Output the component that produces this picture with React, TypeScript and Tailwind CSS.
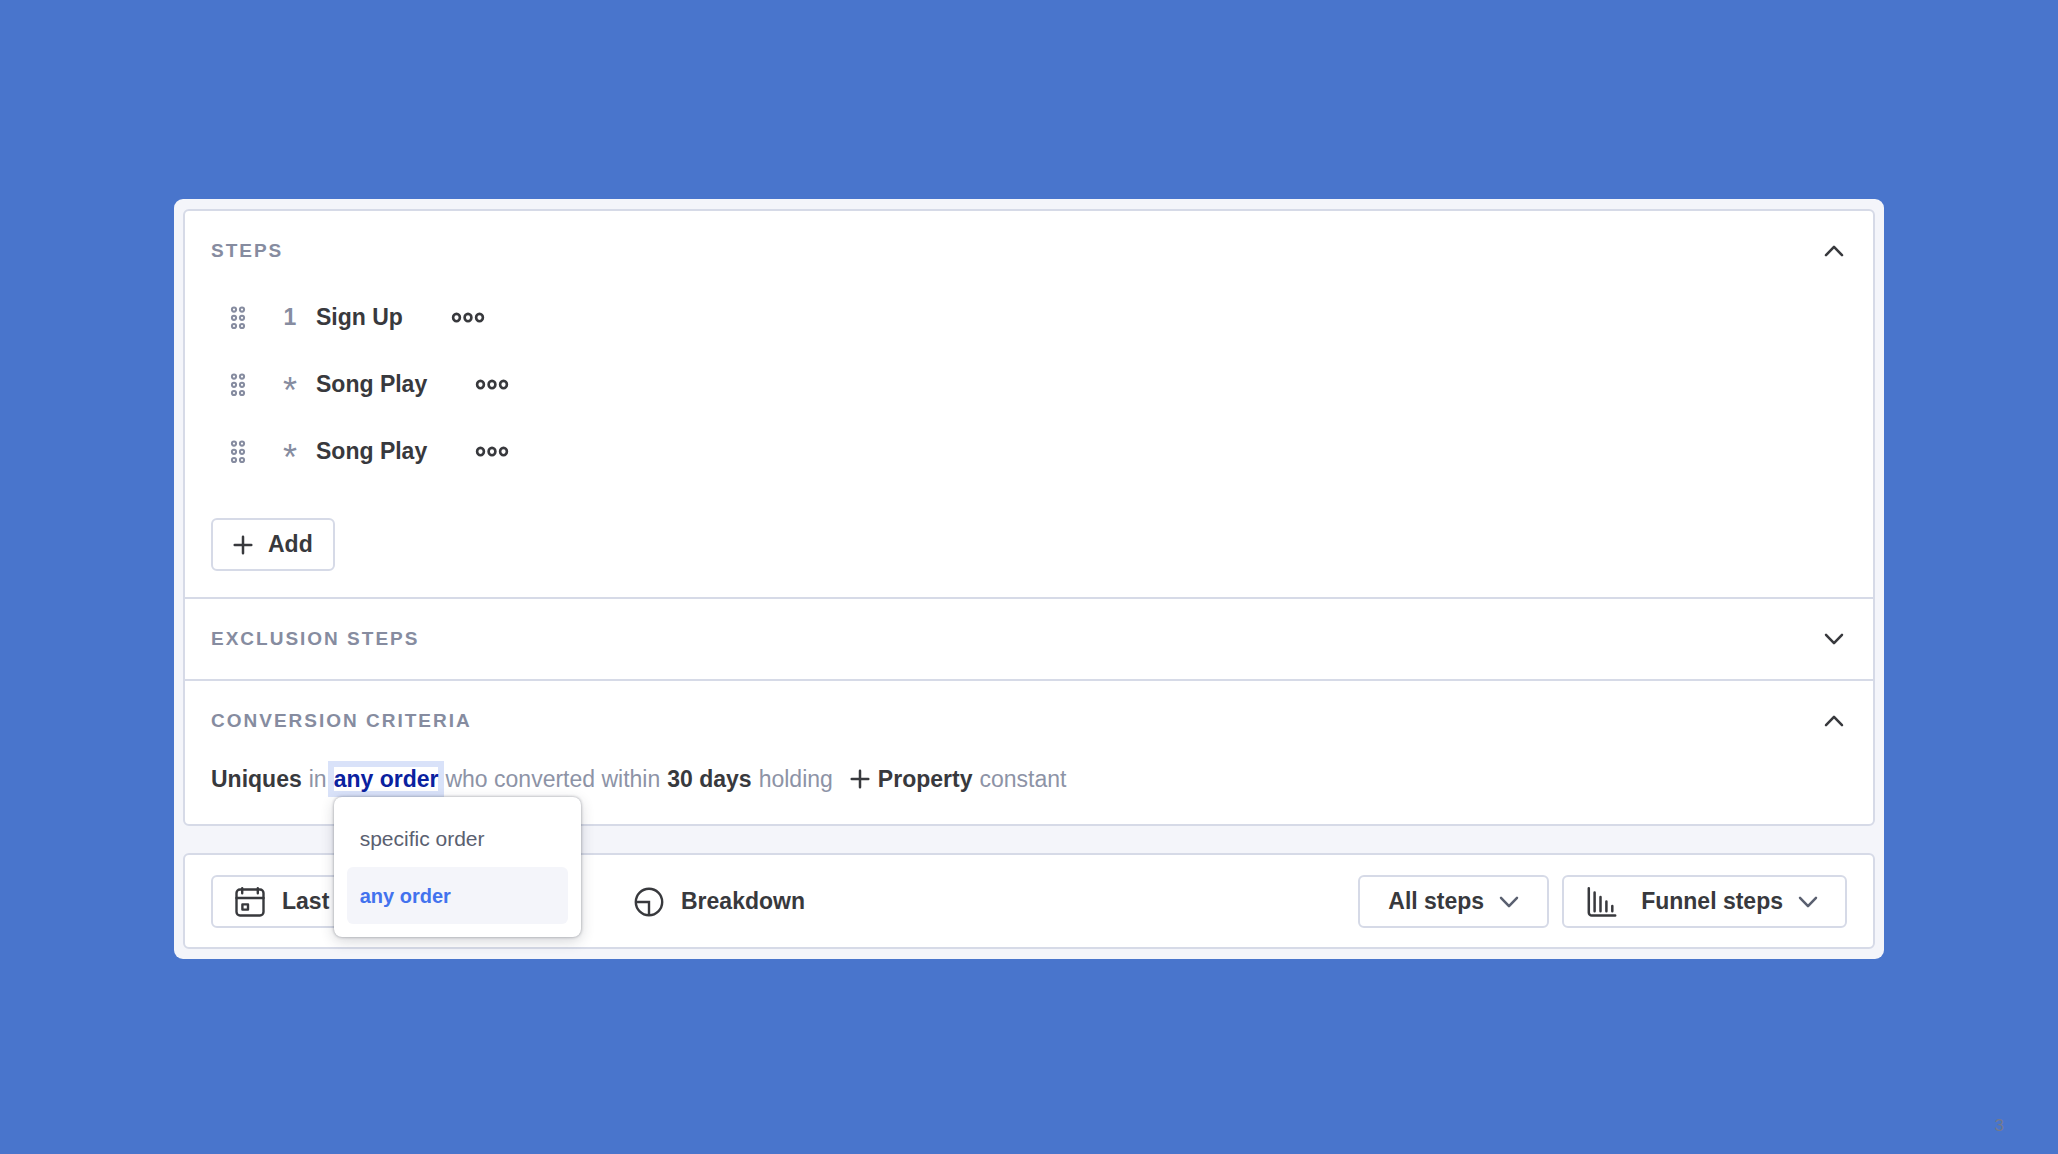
import { useState } from "react";
import type { ReactNode } from "react";

type Step = { id: number; marker: string; name: string };

const STEPS: Step[] = [
  { id: 1, marker: "1", name: "Sign Up" },
  { id: 2, marker: "*", name: "Song Play" },
  { id: 3, marker: "*", name: "Song Play" },
];

const ORDERS = ["specific order", "any order"];

// ── Icons ──
function Chevron({ up = false, className = "" }: { up?: boolean; className?: string }) {
  return (
    <svg width="20" height="12" viewBox="0 0 20 12" fill="none" stroke="currentColor" strokeWidth="2.5" strokeLinecap="round" strokeLinejoin="round" className={`shrink-0 ${className}`}>
      <path d={up ? "M2 10.2 10 1.8l8 8.4" : "M2 1.8 10 10.2l8-8.4"} />
    </svg>
  );
}

function Plus({ className = "" }: { className?: string }) {
  return (
    <svg width="20" height="20" viewBox="0 0 20 20" fill="none" stroke="currentColor" strokeWidth="2.5" strokeLinecap="round" className={`shrink-0 ${className}`}>
      <path d="M10 1.7v16.6M1.7 10h16.6" />
    </svg>
  );
}

function DragHandle() {
  return (
    <svg width="16" height="24" viewBox="0 0 16 24" fill="none" stroke="currentColor" strokeWidth="2">
      {[4, 12].map((x) => [3.6, 11.8, 20].map((y) => <circle key={`${x}-${y}`} cx={x} cy={y} r="2.1" />))}
    </svg>
  );
}

function More() {
  return (
    <svg width="34" height="12" viewBox="0 0 34 12" fill="none" stroke="currentColor" strokeWidth="2.6">
      {[5.5, 17, 28.5].map((x) => <ellipse key={x} cx={x} cy="5.6" rx="3.4" ry="3.7" />)}
    </svg>
  );
}

function Calendar() {
  return (
    <svg width="30" height="30" viewBox="0 0 30 30" fill="none" stroke="currentColor" strokeWidth="2.4" strokeLinecap="round" className="shrink-0">
      <rect x="1.5" y="2.5" width="27" height="26" rx="3.5" />
      <path d="M1.5 11h27M7.2 1.2v5M22.8 1.2v5" />
      <rect x="7.4" y="17.4" width="5.6" height="5.2" strokeLinejoin="round" />
    </svg>
  );
}

function Pie() {
  return (
    <svg width="30" height="30" viewBox="0 0 30 30" fill="none" stroke="currentColor" strokeWidth="2.4" className="shrink-0">
      <circle cx="15" cy="15" r="13.2" />
      <path d="M1.8 15H15v13.2" />
    </svg>
  );
}

function FunnelBars() {
  return (
    <svg width="30" height="32" viewBox="0 0 30 32" fill="none" stroke="currentColor" strokeWidth="2.5" strokeLinecap="round" className="shrink-0">
      <path d="M1.8 2.2v24.2a3 3 0 0 0 3 3h23.4" />
      <path d="M7.6 6.6v18.6M13.5 11v14.2M19.4 15.6v9.6M25.3 20v5.2" />
    </svg>
  );
}

// ── Collapsible section ──
function Section({ title, open = false, divided = true, children }: { title: string; open?: boolean; divided?: boolean; children?: ReactNode }) {
  return (
    <section className={divided ? "border-t-2 border-[#d6dae7]" : ""}>
      <div className="flex h-20 items-center justify-between px-[26px]">
        <h2 className="text-[19px] font-bold uppercase tracking-[2px] text-[#868ca0]">{title}</h2>
        <button aria-label={`Toggle ${title}`} aria-expanded={open} className="px-[3px]">
          <Chevron up={open} />
        </button>
      </div>
      {children}
    </section>
  );
}

function StepRow({ step }: { step: Step }) {
  return (
    <li className="flex h-[53px] items-center">
      <button aria-label={`Reorder ${step.name}`} className="ml-[19px] text-[#868ca0]">
        <DragHandle />
      </button>
      <span className="ml-9 flex w-4 justify-center font-bold text-[#868ca0]">
        {step.marker === "*" ? <span className="pt-3 text-[36px] font-normal leading-[30px]">*</span> : step.marker}
      </span>
      <button className="ml-[18px] font-bold">{step.name}</button>
      <button aria-label={`More options for ${step.name}`} className="ml-12">
        <More />
      </button>
    </li>
  );
}

function OrderMenu({ value, onSelect }: { value: string; onSelect: (order: string) => void }) {
  return (
    <div role="menu" className="absolute left-0 top-[30px] z-10 flex w-[247px] flex-col rounded-lg bg-white p-[13px] shadow-[0_0_3px_rgba(40,45,60,0.45),0_4px_14px_rgba(40,45,60,0.2)]">
      {ORDERS.map((order) => (
        <button
          key={order}
          role="menuitem"
          onClick={() => onSelect(order)}
          className={`h-[57px] rounded-md px-[13px] text-left ${order === value ? "bg-[#f4f5fa] text-[20px] font-bold text-[#4272ee]" : "text-[21px] text-[#5a6070]"}`}
        >
          {order}
        </button>
      ))}
    </div>
  );
}

export default function App() {
  const [order, setOrder] = useState("any order");

  return (
    <div className="flex min-h-screen flex-col bg-[#4975cc] px-[174px] pt-[199px] font-['Liberation_Sans',Arial,sans-serif] text-[23px] text-[#38393d]">
      <main className="rounded-[9px] bg-[#f4f5fa] px-[9px] py-[10px]">
        <div className="rounded-md border-2 border-[#d6dae7] bg-white">
          <Section title="Steps" open divided={false}>
            <div className="px-[26px] pb-[26px]">
              <ul className="flex flex-col gap-[14px]">
                {STEPS.map((step) => <StepRow key={step.id} step={step} />)}
              </ul>
              <button className="mt-10 flex h-[53px] items-center gap-[15px] rounded-md border-2 border-[#d6dae7] px-5 font-bold">
                <Plus />
                Add
              </button>
            </div>
          </Section>

          <Section title="Exclusion Steps" />

          <Section title="Conversion Criteria" open>
            <div className="flex items-center gap-[7px] px-[26px] pb-[27px] leading-[24px] text-[#8d93a6]">
              <button className="font-bold text-[#38393d]">Uniques</button>
              <span>in</span>
              <div className="relative my-[6px] flex">
                <button aria-haspopup="menu" aria-expanded className="font-bold text-[#0a219f] ring-6 ring-[#d9e2f9]">
                  {order}
                </button>
                <OrderMenu value={order} onSelect={setOrder} />
              </div>
              <span>who converted within</span>
              <button className="font-bold text-[#38393d]">30 days</button>
              <span>holding</span>
              <button className="ml-[10px] flex items-center gap-2 font-bold text-[#38393d]">
                <Plus />
                Property
              </button>
              <span>constant</span>
            </div>
          </Section>
        </div>

        <div className="mt-[27px] flex items-center rounded-md border-2 border-[#d6dae7] bg-white px-[26px] pb-[19px] pt-5">
          <button className="flex h-[53px] w-[340px] items-center rounded-md border-2 border-[#d6dae7] px-[22px] font-bold">
            <Calendar />
            <span className="ml-[17px]">Last</span>
            <Chevron className="ml-auto text-[#5a6070]" />
          </button>
          <button className="ml-[83px] flex h-[53px] items-center gap-[17px] font-bold">
            <Pie />
            Breakdown
          </button>
          <div className="ml-auto flex gap-[13px]">
            <button className="flex h-[53px] items-center gap-[15px] rounded-md border-2 border-[#d6dae7] px-7 font-bold">
              All steps
              <Chevron className="text-[#5a6070]" />
            </button>
            <button className="flex h-[53px] items-center rounded-md border-2 border-[#d6dae7] pl-[23px] pr-[27px] font-bold">
              <FunnelBars />
              <span className="ml-6 mr-[15px]">Funnel steps</span>
              <Chevron className="text-[#5a6070]" />
            </button>
          </div>
        </div>
      </main>

      <footer className="mr-[-120px] mt-auto pb-4 text-right text-[17px] text-[#757a8c]">3</footer>
    </div>
  );
}
